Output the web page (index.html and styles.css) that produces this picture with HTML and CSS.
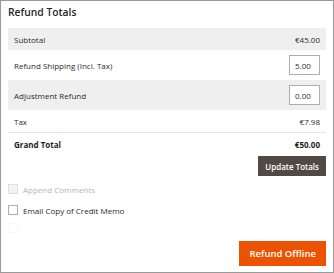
FILE: index.html
```html
<!DOCTYPE html>
<html>
<head>
  <link rel="stylesheet" href="styles.css">
</head>
<body>
  <div class="panel">
    <h2 class="panel-title">Refund Totals</h2>

    <div class="totals">
      <div class="row shaded">
        <span>Subtotal</span>
        <span>€45.00</span>
      </div>
      <div class="row tall">
        <span>Refund Shipping (Incl. Tax)</span>
        <input class="amount" type="text" value="5.00">
      </div>
      <div class="row tall shaded">
        <span>Adjustment Refund</span>
        <input class="amount" type="text" value="0.00">
      </div>
      <div class="row">
        <span>Tax</span>
        <span>€7.98</span>
      </div>
      <div class="row grand">
        <span>Grand Total</span>
        <span>€50.00</span>
      </div>
    </div>

    <div class="update-line">
      <button class="btn-update">Update Totals</button>
    </div>

    <div class="options">
      <label class="option disabled"><span class="box"></span>Append Comments</label>
      <label class="option"><span class="box"></span>Email Copy of Credit Memo</label>
      <span class="ghost-box"></span>
    </div>

    <div class="submit-line">
      <button class="btn-refund">Refund Offline</button>
    </div>
  </div>
</body>
</html>
```

FILE: styles.css
```css
html, body {
  margin: 0;
  padding: 0;
  background: #fff;
}

.panel {
  box-sizing: border-box;
  width: 334px;
  height: 273px;
  border: 1px solid #9a9a9a;
  padding: 0 7px;
  font-family: "Open Sans", "Noto Sans", sans-serif;
  color: #2b2b2b;
}

.panel-title {
  margin: 0;
  padding-top: 4px;
  height: 23px;
  font-size: 10.3px;
  font-weight: 600;
  color: #262626;
}

.totals {
  font-size: 8px;
}

.row {
  display: flex;
  justify-content: space-between;
  align-items: center;
  height: 22px;
  padding: 0 6px 0 6px;
}

.row.tall {
  height: 30px;
}

.row.shaded {
  background: #efefef;
}

.row.grand {
  border-top: 1px solid #e6e6e6;
  height: 23px;
  font-weight: 700;
  color: #1e1e1e;
}

.amount {
  box-sizing: border-box;
  width: 31px;
  height: 20px;
  margin: 0;
  padding: 0 5px;
  border: 1px solid #adadad;
  background: #fff;
  font-family: inherit;
  font-size: 8px;
  color: #2b2b2b;
  text-align: left;
}

.update-line {
  display: flex;
  justify-content: flex-end;
}

.btn-update {
  height: 20px;
  padding: 0 7px;
  border: 0;
  background: #514943;
  color: #fff;
  font-family: inherit;
  font-size: 8px;
  font-weight: 600;
}

.options {
  display: flex;
  flex-direction: column;
  gap: 11px;
  padding-top: 8px;
  font-size: 8px;
}

.option {
  display: flex;
  align-items: center;
  gap: 5px;
  height: 10px;
}

.option.disabled {
  color: #b5b5b5;
}

.box {
  box-sizing: border-box;
  width: 10px;
  height: 10px;
  border: 1px solid #adadad;
  background: #fff;
}

.option.disabled .box {
  border-color: #e0e0e0;
  background: #f4f4f4;
}

.ghost-box {
  box-sizing: border-box;
  width: 10px;
  height: 10px;
  margin-top: -3px;
  border: 1px solid #f9f9f9;
}

.submit-line {
  display: flex;
  justify-content: flex-end;
  margin-top: 8px;
}

.btn-refund {
  height: 25px;
  padding: 0 9px;
  border: 1px solid #eb5202;
  background: #eb5202;
  color: #fff;
  font-family: inherit;
  font-size: 9.5px;
  font-weight: 600;
}
```
